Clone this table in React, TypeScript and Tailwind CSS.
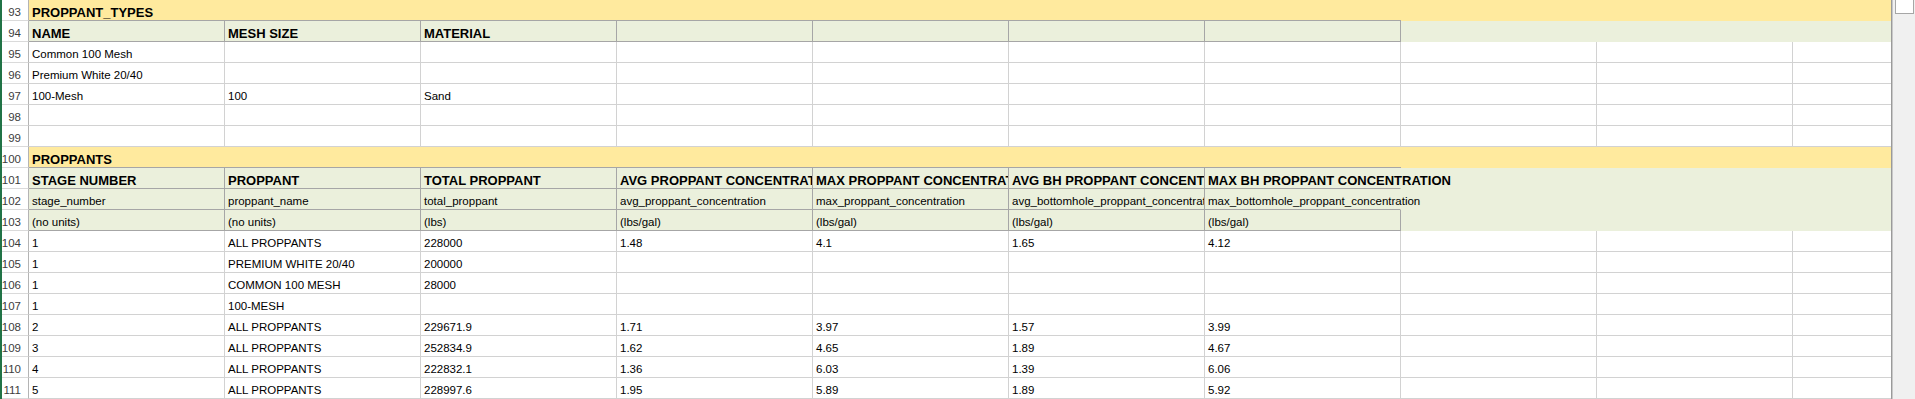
type Kind = "section" | "head" | "data";

type SheetRow = {
  n: number;
  kind: Kind;
  cells: string[];
  bold?: boolean;
  open?: boolean;
};

const rows: SheetRow[] = [
  { n: 93, kind: "section", cells: ["PROPPANT_TYPES"] },
  { n: 94, kind: "head", bold: true, cells: ["NAME", "MESH SIZE", "MATERIAL", "", "", "", ""] },
  { n: 95, kind: "data", cells: ["Common 100 Mesh"] },
  { n: 96, kind: "data", cells: ["Premium White 20/40"] },
  { n: 97, kind: "data", cells: ["100-Mesh", "100", "Sand"] },
  { n: 98, kind: "data", cells: [] },
  { n: 99, kind: "data", cells: [] },
  { n: 100, kind: "section", cells: ["PROPPANTS"] },
  {
    n: 101,
    kind: "head",
    bold: true,
    open: true,
    cells: [
      "STAGE NUMBER",
      "PROPPANT",
      "TOTAL PROPPANT",
      "AVG PROPPANT CONCENTRATION",
      "MAX PROPPANT CONCENTRATION",
      "AVG BH PROPPANT CONCENTRATION",
      "MAX BH PROPPANT CONCENTRATION",
    ],
  },
  {
    n: 102,
    kind: "head",
    open: true,
    cells: [
      "stage_number",
      "proppant_name",
      "total_proppant",
      "avg_proppant_concentration",
      "max_proppant_concentration",
      "avg_bottomhole_proppant_concentration",
      "max_bottomhole_proppant_concentration",
    ],
  },
  {
    n: 103,
    kind: "head",
    cells: ["(no units)", "(no units)", "(lbs)", "(lbs/gal)", "(lbs/gal)", "(lbs/gal)", "(lbs/gal)"],
  },
  { n: 104, kind: "data", cells: ["1", "ALL PROPPANTS", "228000", "1.48", "4.1", "1.65", "4.12"] },
  { n: 105, kind: "data", cells: ["1", "PREMIUM WHITE 20/40", "200000"] },
  { n: 106, kind: "data", cells: ["1", "COMMON 100 MESH", "28000"] },
  { n: 107, kind: "data", cells: ["1", "100-MESH"] },
  { n: 108, kind: "data", cells: ["2", "ALL PROPPANTS", "229671.9", "1.71", "3.97", "1.57", "3.99"] },
  { n: 109, kind: "data", cells: ["3", "ALL PROPPANTS", "252834.9", "1.62", "4.65", "1.89", "4.67"] },
  { n: 110, kind: "data", cells: ["4", "ALL PROPPANTS", "222832.1", "1.36", "6.03", "1.39", "6.06"] },
  { n: 111, kind: "data", cells: ["5", "ALL PROPPANTS", "228997.6", "1.95", "5.89", "1.89", "5.92"] },
];

function RowNumber({ n }: { n: number }) {
  return (
    <div className="flex h-full w-[27px] shrink-0 items-end justify-end border-r border-b border-r-[#b4b4b4] border-b-[#dadada] bg-white pr-[7px] pb-[2px] text-[11.5px] leading-none text-[#3c3c3c]">
      {n}
    </div>
  );
}

function SectionRow({ row }: { row: SheetRow }) {
  return (
    <div className="flex h-[21px] bg-[#ffea9e]">
      <RowNumber n={row.n} />
      <div className="flex w-[1372px] shrink-0 items-end border-b border-[#a6a6a6] pb-[1px] pl-[3px] text-[13px] font-bold leading-none text-black">
        {row.cells[0]}
      </div>
      <div className="flex-1" />
    </div>
  );
}

function HeadRow({ row }: { row: SheetRow }) {
  return (
    <div className="flex h-[21px] bg-[#ebf0dc]">
      <RowNumber n={row.n} />
      {row.cells.map((text, i) => {
        const open = i === 6 && row.open;
        return (
          <div
            key={i}
            className={`flex w-[196px] shrink-0 items-end whitespace-nowrap border-r border-b border-[#a6a6a6] pl-[3px] leading-none text-black ${
              open ? "overflow-visible border-r-transparent" : "overflow-hidden"
            } ${row.bold ? "pb-[1px] text-[13px] font-bold" : "pb-[2px] text-[11.5px]"}`}
          >
            {text}
          </div>
        );
      })}
      <div className="flex-1" />
    </div>
  );
}

function DataRow({ row }: { row: SheetRow }) {
  const cells = Array.from({ length: 10 }, (_, i) => row.cells[i] ?? "");
  return (
    <div className="flex h-[21px] bg-white">
      <RowNumber n={row.n} />
      {cells.map((text, i) => (
        <div
          key={i}
          className="flex w-[196px] shrink-0 items-end overflow-hidden whitespace-nowrap border-r border-b border-[#d2d2d2] pb-[2px] pl-[3px] text-[11.5px] leading-none text-black"
        >
          {text}
        </div>
      ))}
    </div>
  );
}

export default function App() {
  return (
    <div className="flex h-[399px] w-[1915px] overflow-hidden bg-white font-['Liberation_Sans',Arial,sans-serif]">
      <div className="w-[2px] shrink-0 bg-[#217346]" />
      <div className="min-w-0 flex-1 overflow-hidden">
        {rows.map((row) =>
          row.kind === "section" ? (
            <SectionRow key={row.n} row={row} />
          ) : row.kind === "head" ? (
            <HeadRow key={row.n} row={row} />
          ) : (
            <DataRow key={row.n} row={row} />
          )
        )}
      </div>
      <div className="w-[1px] shrink-0 bg-[#9a9a9a]" />
      <div className="w-[1px] shrink-0 bg-[#c8c8c8]" />
      <div className="w-[22px] shrink-0 bg-[#f0f0f0]">
        <div className="ml-[2px] h-[14px] w-[19px] border border-t-0 border-[#a6a6a6] bg-white" />
      </div>
    </div>
  );
}
